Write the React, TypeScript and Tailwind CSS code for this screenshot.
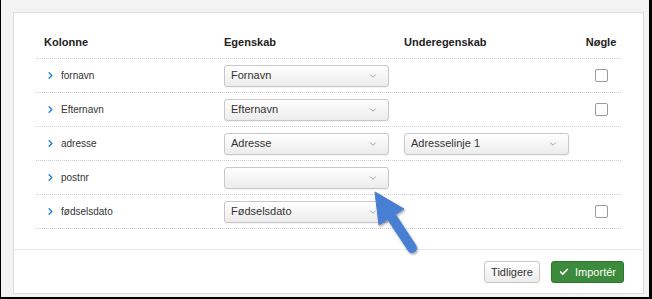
import { ChevronRight, ChevronDown, Check } from 'lucide-react'

type Row = {
  name: string
  prop: string | null
  sub?: string
  key: boolean
}

const rows: Row[] = [
  { name: 'fornavn', prop: 'Fornavn', key: true },
  { name: 'Efternavn', prop: 'Efternavn', key: true },
  { name: 'adresse', prop: 'Adresse', sub: 'Adresselinje 1', key: false },
  { name: 'postnr', prop: '', key: false },
  { name: 'fødselsdato', prop: 'Fødselsdato', key: true },
]

function Select({ value }: { value: string }) {
  return (
    <div className="flex items-center justify-between h-[22px] w-[165px] rounded-[3px] border border-[#c8c8c8] bg-gradient-to-b from-white to-[#ececec] pl-[6px] pr-[10px] text-[11px] text-[#333] shadow-[0_1px_1px_rgba(0,0,0,0.05)]">
      <span>{value}</span>
      <ChevronDown size={10} strokeWidth={1.6} className="text-[#777]" />
    </div>
  )
}

function Checkbox() {
  return <div className="w-[13px] h-[13px] rounded-[2px] border border-[#9a9a9a] bg-white" />
}

export default function App() {
  return (
    <div
      className="relative w-[652px] h-[299px] bg-[#f3f3f3] border-l border-r-[3px] border-b-2 border-black overflow-hidden"
      style={{ fontFamily: '"Liberation Sans", Arial, sans-serif' }}
    >
      <div className="ml-[12px] mt-[12px] w-[631px] h-[282px] bg-white border border-[#dddddd] flex flex-col">
        {/* Table */}
        <div className="px-[22px]">
          <div className="grid grid-cols-[188px_180px_178px_38px] h-[46px] items-end pb-[8px] border-b border-dotted border-[#cfcfcf] text-[11px] font-bold text-[#222]">
            <div className="pl-[8px]">Kolonne</div>
            <div>Egenskab</div>
            <div>Underegenskab</div>
            <div className="text-center">Nøgle</div>
          </div>
          {rows.map((r) => (
            <div
              key={r.name}
              className="grid grid-cols-[188px_180px_178px_38px] h-[34px] items-center border-b border-dotted border-[#cfcfcf]"
            >
              <div className="flex items-center pl-[9px] gap-[5px] text-[10px] text-[#333]">
                <ChevronRight size={11} strokeWidth={3} className="text-[#1d80d6]" />
                <span>{r.name}</span>
              </div>
              <div>{r.prop !== null && <Select value={r.prop} />}</div>
              <div>{r.sub && <Select value={r.sub} />}</div>
              <div className="flex justify-center">{r.key && <Checkbox />}</div>
            </div>
          ))}
        </div>

        {/* Footer */}
        <div className="mt-[20px] flex-1 border-t border-[#e8e8e8] flex items-center justify-end gap-[11px] pr-[19px] pt-[1px]">
          <button className="h-[22px] w-[56px] rounded-[3px] border border-[#c6c6c6] bg-gradient-to-b from-white to-[#ececec] text-[11px] text-[#333]">
            Tidligere
          </button>
          <button className="h-[22px] w-[73px] rounded-[3px] border border-[#2f732f] bg-[#3c8b3c] text-[11px] text-white flex items-center justify-center gap-[6px]">
            <Check size={10} strokeWidth={4} />
            <span>Importér</span>
          </button>
        </div>
      </div>

      {/* Pointer arrow */}
      <svg
        className="absolute left-0 top-0 pointer-events-none"
        width="652"
        height="299"
        viewBox="0 0 652 299"
      >
        <defs>
          <filter id="sh" x="-20%" y="-20%" width="140%" height="140%">
            <feDropShadow dx="1" dy="1.5" stdDeviation="1.2" floodColor="#000" floodOpacity="0.35" />
          </filter>
        </defs>
        <g filter="url(#sh)" fill="#4a7fd2" stroke="#4a7fd2">
          <line x1="390" y1="216" x2="411" y2="248" strokeWidth="10" strokeLinecap="round" />
          <polygon points="374,192 403,209 378,225" strokeWidth="1" strokeLinejoin="round" />
        </g>
      </svg>
    </div>
  )
}
